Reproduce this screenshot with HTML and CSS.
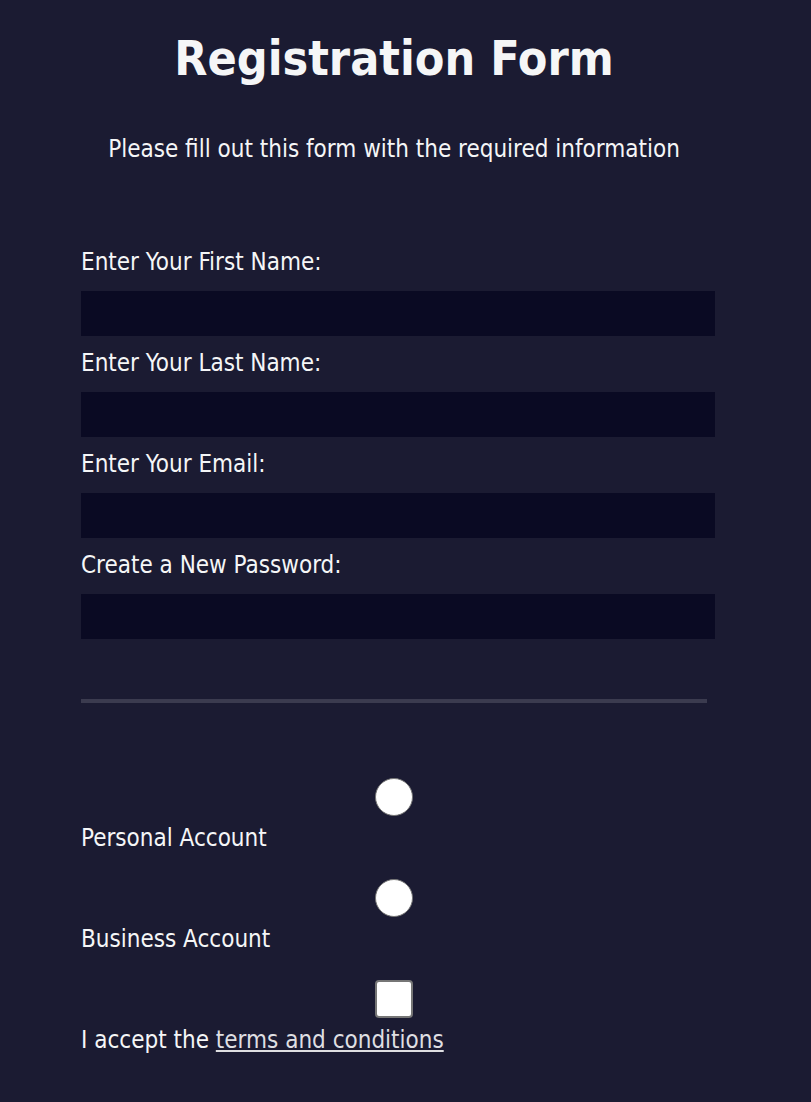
FILE: index.html
```html
<!DOCTYPE html>
<html lang="en">
<head>
<meta charset="utf-8">
<title>Registration Form</title>
<link rel="stylesheet" href="styles.css">
</head>
<body>
<div class="page">
  <h1 class="title">Registration Form</h1>
  <p class="intro">Please fill out this form with the required information</p>
  <form class="form" action="#">
    <div class="fields">
      <label class="field"><span class="field-label">Enter Your First Name:</span><input class="text-input" type="text"></label>
      <label class="field"><span class="field-label">Enter Your Last Name:</span><input class="text-input" type="text"></label>
      <label class="field"><span class="field-label">Enter Your Email:</span><input class="text-input" type="email"></label>
      <label class="field"><span class="field-label">Create a New Password:</span><input class="text-input" type="password"></label>
    </div>
    <div class="choices">
      <label class="choice"><input class="radio" type="radio" name="account"><span>Personal Account</span></label>
      <label class="choice"><input class="radio" type="radio" name="account"><span>Business Account</span></label>
      <label class="choice"><input class="checkbox" type="checkbox"><span>I accept the <a class="terms" href="#">terms and conditions</a></span></label>
    </div>
  </form>
</div>
</body>
</html>
```
FILE: styles.css
```css
html, body {
  margin: 0;
  padding: 0;
  background: #1b1b32;
}
body {
  color: #f5f6f7;
  font-family: "DejaVu Sans Condensed", "DejaVu Sans", sans-serif;
  font-stretch: condensed;
  font-size: 24px;
  line-height: 29px;
}
.page {
  width: 788px;
  padding-bottom: 49px;
}
.title {
  margin: 29px 0 0;
  font-size: 48px;
  line-height: 58px;
  font-weight: bold;
  text-align: center;
}
.intro {
  margin: 48px 0 0;
  text-align: center;
}
.form {
  width: 626px;
  margin: 84px auto 0;
}
.fields {
  display: flex;
  flex-direction: column;
  gap: 13px;
  padding-bottom: 60px;
  border-bottom: 4px solid #3b3b4f;
}
.field {
  display: block;
}
.field-label {
  display: block;
}
.text-input {
  display: block;
  box-sizing: border-box;
  margin: 14px 0 0;
  width: 634px;
  height: 45px;
  padding: 0 3px;
  background: #0a0a23;
  border: 1px solid #0a0a23;
  color: #ffffff;
  font: inherit;
  outline: none;
}
.choices {
  display: flex;
  flex-direction: column;
  gap: 26px;
  padding-top: 75px;
}
.choice {
  display: block;
}
.choice span {
  display: block;
}
.radio, .checkbox {
  appearance: none;
  -webkit-appearance: none;
  display: block;
  box-sizing: border-box;
  margin: 0 auto 8px;
  width: 38px;
  height: 38px;
  background: #ffffff;
}
.radio {
  border: 1.5px solid #767676;
  border-radius: 50%;
}
.checkbox {
  border: 2px solid #767676;
  border-radius: 4px;
}
.terms {
  color: #dfdfe2;
  text-decoration: underline;
}
```
